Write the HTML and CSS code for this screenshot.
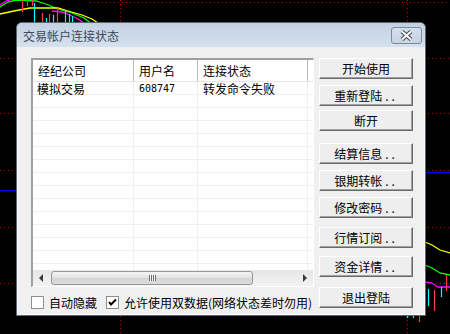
FILE: index.html
```html
<!DOCTYPE html>
<html lang="zh-CN">
<head>
    <meta charset="UTF-8">
    <title>交易帐户连接状态</title>
    <link rel="stylesheet" href="styles.css">
</head>
<body>
    <!-- stock chart behind the dialog -->
    <svg class="chart" width="450" height="334" viewBox="0 0 450 334">
        <g stroke="#d00000" stroke-width="1" stroke-dasharray="1 3" fill="none">
            <line x1="90" y1="2.5" x2="450" y2="2.5"/>
            <line x1="0" y1="58.5" x2="450" y2="58.5"/>
            <line x1="0" y1="113.5" x2="450" y2="113.5"/>
            <line x1="0" y1="170.5" x2="450" y2="170.5"/>
            <line x1="0" y1="227.5" x2="450" y2="227.5"/>
            <line x1="0" y1="283.5" x2="450" y2="283.5"/>
            <line x1="120.5" y1="0" x2="120.5" y2="334"/>
            <line x1="407.5" y1="0" x2="407.5" y2="334"/>
        </g>
        <line x1="0" y1="190.5" x2="20" y2="190.5" stroke="#0000ff"/>
        <line x1="420" y1="172.5" x2="450" y2="172.5" stroke="#0000ff"/>
        <g fill="none" stroke-width="1.3">
            <polyline stroke="#00ff00" points="0,7 8,2 16,0 36,1 46,4 58,9 72,13 84,18 92,24"/>
            <polyline stroke="#ffff00" points="0,14 14,11 30,8 58,8 68,11 82,15 92,19 98,23"/>
            <polyline stroke="#ff00ff" points="0,5 6,1 10,0"/>
            <polyline stroke="#ff00ff" points="52,11 62,12 70,15 78,19 84,23"/>
            <polyline stroke="#ffff00" points="425,242 432,245 440,250 450,253"/>
            <polyline stroke="#00ff00" points="425,265 432,268 440,273 450,275"/>
            <polyline stroke="#ff00ff" points="425,282 432,283 438,287 450,287"/>
        </g>
        <g stroke-width="1.2">
            <line x1="34.5" y1="3" x2="34.5" y2="24" stroke="#00ffff"/>
            <line x1="46.5" y1="18" x2="46.5" y2="24" stroke="#00ffff"/>
            <line x1="53.5" y1="15" x2="53.5" y2="24" stroke="#00ffff"/>
            <line x1="65.5" y1="10" x2="65.5" y2="24" stroke="#00ffff"/>
            <line x1="69.5" y1="14" x2="69.5" y2="24" stroke="#00ffff"/>
            <line x1="72.5" y1="16" x2="72.5" y2="24" stroke="#00ffff"/>
            <line x1="22.5" y1="0" x2="22.5" y2="12" stroke="#ff4040"/>
            <line x1="27.5" y1="0" x2="27.5" y2="6" stroke="#ff4040"/>
            <line x1="32.5" y1="0" x2="32.5" y2="6" stroke="#ff4040"/>
            <line x1="42.5" y1="13" x2="42.5" y2="24" stroke="#ff4040"/>
            <line x1="49.5" y1="14" x2="49.5" y2="24" stroke="#ff4040"/>
            <line x1="57.5" y1="8" x2="57.5" y2="22" stroke="#ff4040"/>
            <line x1="428.5" y1="289" x2="428.5" y2="306" stroke="#00ffff"/>
            <line x1="441.5" y1="287" x2="441.5" y2="297" stroke="#00ffff"/>
            <line x1="434.5" y1="290" x2="434.5" y2="311" stroke="#ff4040"/>
            <line x1="446.5" y1="275" x2="446.5" y2="291" stroke="#ff4040"/>
            <line x1="407.5" y1="315" x2="407.5" y2="318" stroke="#00ffff"/>
            <line x1="413.5" y1="315" x2="413.5" y2="318" stroke="#00ffff"/>
            <line x1="419.5" y1="315" x2="419.5" y2="322" stroke="#ff4040"/>
        </g>
    </svg>

    <div class="dialog">
        <div class="titlebar">
            <span class="title">交易帐户连接状态</span>
            <span class="close">
                <svg width="29" height="15" viewBox="0 0 29 15">
                    <path d="M10 3.5 L19 11.5 M19 3.5 L10 11.5" stroke="#3e4858" stroke-width="4" fill="none"/>
                    <path d="M10 3.5 L19 11.5 M19 3.5 L10 11.5" stroke="#fff" stroke-width="2" fill="none"/>
                </svg>
            </span>
        </div>

        <div class="client">
            <div class="left">
                <div class="list">
                    <div class="list-head">
                        <div class="col c1">经纪公司</div>
                        <div class="col c2">用户名</div>
                        <div class="col c3">连接状态</div>
                        <div class="col c4"></div>
                    </div>
                    <!-- grid lines of the empty rows are painted by the background -->
                    <div class="list-body">
                        <div class="row">
                            <div class="cell c1">模拟交易</div>
                            <div class="cell c2 num">608747</div>
                            <div class="cell c3">转发命令失败</div>
                        </div>
                    </div>
                    <div class="hscroll">
                        <span class="arrow arrow-left"></span>
                        <div class="track">
                            <div class="thumb"><span class="grip"></span></div>
                        </div>
                        <span class="arrow arrow-right"></span>
                    </div>
                </div>

                <div class="options">
                    <label class="check"><span class="box"></span>自动隐藏</label>
                    <label class="check"><span class="box checked">
                        <svg width="11" height="11" viewBox="0 0 11 11"><path d="M2 5 L4 7.5 L9 2.5" stroke="#000" stroke-width="2" fill="none"/></svg>
                    </span>允许使用双数据(网络状态差时勿用)</label>
                </div>
            </div>

            <div class="buttons">
                <button class="btn b1">开始使用</button>
                <button class="btn b2">重新登陆<span class="dots">..</span></button>
                <button class="btn b3">断开</button>
                <button class="btn b4">结算信息<span class="dots">..</span></button>
                <button class="btn b5">银期转帐<span class="dots">..</span></button>
                <button class="btn b6">修改密码<span class="dots">..</span></button>
                <button class="btn b7">行情订阅<span class="dots">..</span></button>
                <button class="btn b8">资金详情<span class="dots">..</span></button>
                <button class="btn b9">退出登陆</button>
            </div>
        </div>
    </div>
</body>
</html>
```

FILE: styles.css
```css
body {
    margin: 0;
    width: 450px;
    height: 334px;
    background-color: #000;
    position: relative;
    overflow: hidden;
    font-family: "Noto Sans CJK SC", "DejaVu Sans", sans-serif;
    font-size: 12px;
    color: #000;
}

.chart {
    position: absolute;
    left: 0;
    top: 0;
}

.dialog {
    position: absolute;
    left: 16px;
    top: 22px;
    width: 408px;
    height: 292px;
    border: 1px solid #5d6570;
    border-radius: 6px 6px 0 0;
    background-color: #f0f0f0;
    display: flex;
    flex-direction: column;
}

.titlebar {
    height: 24px;
    border-radius: 5px 5px 0 0;
    background: linear-gradient(#c2d1e3, #d6e1ee);
    display: flex;
    align-items: center;
    justify-content: space-between;
    padding: 0 3px 0 6px;
}

.title {
    color: #3c4a5e;
    font-size: 12px;
}

.close {
    width: 29px;
    height: 15px;
    border: 1px solid #7d8ba0;
    border-radius: 3px;
    background: linear-gradient(#d4dfec, #c6d3e3);
    display: flex;
    margin-top: 1px;
}

.client {
    flex: 1;
    display: flex;
    padding: 11px 11px 0 13px;
    border-left: 1px solid #fafafa;
    border-right: 1px solid #fafafa;
    border-bottom: 1px solid #fafafa;
}

.left {
    width: 283px;
    display: flex;
    flex-direction: column;
}

.list {
    height: 226px;
    border-top: 2px solid #a0a0a0;
    border-left: 2px solid #a0a0a0;
    border-right: 1px solid #ffffff;
    border-bottom: 1px solid #ffffff;
    background-color: #fff;
    display: flex;
    flex-direction: column;
    overflow: hidden;
}

.list-head {
    height: 21px;
    display: flex;
    border-bottom: 1px solid #e5e5e5;
    flex-shrink: 0;
}

.col {
    height: 21px;
    line-height: 21px;
    padding-left: 5px;
    box-sizing: border-box;
    border-right: 1px solid #b9b9b9;
    box-shadow: 1px 0 0 #fff;
}

.list-head .c4 {
    border-right: none;
    box-shadow: none;
}

.c1 { width: 101px; }
.c2 { width: 64px; }
.c3 { width: 110px; }
.c4 { flex: 1; }

.list-body {
    flex: 1;
    background-image:
        linear-gradient(90deg, transparent 100px, #f0f0f0 100px 101px, transparent 101px),
        linear-gradient(90deg, transparent 164px, #f0f0f0 164px 165px, transparent 165px),
        linear-gradient(90deg, transparent 274px, #f0f0f0 274px 275px, transparent 275px),
        repeating-linear-gradient(transparent 0 12px, #f0f0f0 12px 13px);
}

.row {
    display: flex;
    height: 13px;
}

.cell {
    line-height: 13px;
    padding-left: 5px;
    box-sizing: border-box;
    white-space: nowrap;
}

.row .c1 {
    padding-left: 4px;
}

.num {
    font-family: "DejaVu Sans Mono", monospace;
    font-size: 10px;
}

.hscroll {
    height: 16px;
    display: flex;
    align-items: center;
    background: linear-gradient(#e6e6e6, #f2f2f2);
    flex-shrink: 0;
}

.arrow {
    width: 17px;
    height: 16px;
    position: relative;
}

.arrow::after {
    content: "";
    position: absolute;
    top: 4px;
    border-top: 4px solid transparent;
    border-bottom: 4px solid transparent;
}

.arrow-left::after {
    left: 6px;
    border-right: 4px solid #3a3a3a;
}

.arrow-right::after {
    left: 7px;
    border-left: 4px solid #3a3a3a;
}

.track {
    flex: 1;
    height: 16px;
    padding-left: 1px;
}

.thumb {
    width: 202px;
    height: 14px;
    margin-top: 1px;
    border: 1px solid #999;
    border-radius: 3px;
    box-sizing: border-box;
    background: linear-gradient(#f4f4f4, #e2e2e2 50%, #d4d4d4 51%, #dcdcdc);
    display: flex;
    justify-content: center;
    align-items: center;
}

.grip {
    width: 7px;
    height: 6px;
    background: repeating-linear-gradient(90deg, #6d6d6d 0 1px, #f4f4f4 1px 2px);
}

.options {
    display: flex;
    align-items: center;
    margin-top: 7px;
    white-space: nowrap;
}

.check {
    display: flex;
    align-items: center;
    margin-right: 9px;
}

.box {
    width: 13px;
    height: 13px;
    border: 1px solid #8f8f8f;
    background-color: #fff;
    box-sizing: border-box;
    margin-right: 5px;
    display: flex;
    align-items: center;
    justify-content: center;
}

.buttons {
    width: 96px;
    margin-left: 5px;
    display: flex;
    flex-direction: column;
}

.btn {
    height: 21px;
    padding: 0;
    font-family: "Noto Sans CJK SC", sans-serif;
    font-size: 12px;
    color: #000;
    background-color: #eeeeee;
    border: 1px solid;
    border-color: #fff #6a6a6a #6a6a6a #fff;
    box-shadow: inset -1px -1px 0 #a0a0a0;
    border-radius: 0;
}

.dots {
    letter-spacing: 3px;
    margin-left: 3px;
}

.b2 { margin-top: 6px; }
.b3 { margin-top: 4px; }
.b4 { margin-top: 12px; }
.b5 { margin-top: 6px; }
.b6 { margin-top: 6px; }
.b7 { margin-top: 9px; }
.b8 { margin-top: 8px; }
.b9 { margin-top: 10px; }
```
